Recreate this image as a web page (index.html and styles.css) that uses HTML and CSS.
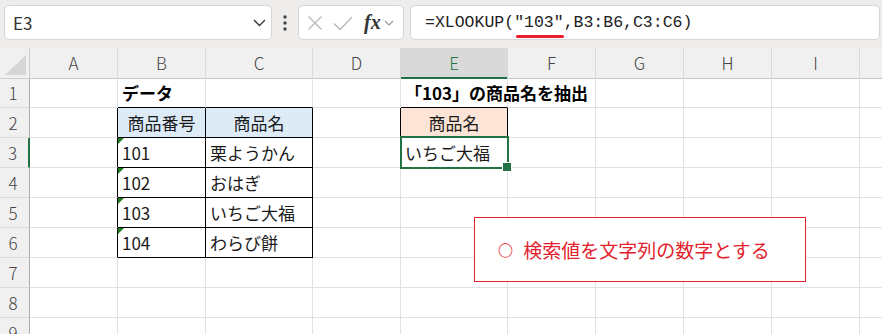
FILE: index.html
```html
<!DOCTYPE html>
<html lang="ja">
  <head>
    <meta charset="UTF-8" />
    <title>XLOOKUP</title>
    <link rel="stylesheet" href="styles.css">
  </head>
  <body>
    <div class="toolbar">
      <div class="namebox">
        <span>E3</span>
        <svg width="13" height="8" viewBox="0 0 13 8"><path d="M1 1l5.5 5.5L12 1" fill="none" stroke="#333" stroke-width="1.3"/></svg>
      </div>
      <div class="dots">
        <svg width="4" height="16" viewBox="0 0 4 16"><circle cx="2" cy="2" r="1.7" fill="#444"/><circle cx="2" cy="8" r="1.7" fill="#444"/><circle cx="2" cy="14" r="1.7" fill="#444"/></svg>
      </div>
      <div class="fxbox">
        <svg width="16" height="16" viewBox="0 0 16 16"><path d="M1.5 1.5l13 13M14.5 1.5l-13 13" stroke="#b8b8b8" stroke-width="1.3"/></svg>
        <svg width="20" height="16" viewBox="0 0 20 16"><path d="M1 8.5l6 6L19 2" fill="none" stroke="#b8b8b8" stroke-width="1.3"/></svg>
        <span class="fx">fx</span>
        <svg width="10" height="6" viewBox="0 0 10 6"><path d="M1 1l4 4 4-4" fill="none" stroke="#999" stroke-width="1.1"/></svg>
      </div>
      <div class="formula">=XLOOKUP(<span class="mark">"103"</span>,B3:B6,C3:C6)</div>
    </div>

    <div class="sheet">
      <div class="row head">
        <div class="corner"><span class="corner-tri"></span></div>
        <div class="ch">A</div><div class="ch">B</div><div class="ch">C</div><div class="ch">D</div>
        <div class="ch on">E</div><div class="ch">F</div><div class="ch">G</div><div class="ch">H</div>
        <div class="ch">I</div><div class="ch"></div>
      </div>
      <div class="row">
        <div class="rh">1</div>
        <div class="c"></div><div class="c kb bold">データ</div><div class="c kb"></div><div class="c"></div>
        <div class="c kb bold">「103」の商品名を抽出</div><div class="c"></div><div class="c"></div><div class="c"></div><div class="c"></div><div class="c"></div>
      </div>
      <div class="row">
        <div class="rh">2</div>
        <div class="c kr"></div><div class="c kr kb blue mid">商品番号</div><div class="c kr kb blue mid">商品名</div><div class="c kr"></div>
        <div class="c kr kb peach mid">商品名</div><div class="c"></div><div class="c"></div><div class="c"></div><div class="c"></div><div class="c"></div>
      </div>
      <div class="row">
        <div class="rh on">3</div>
        <div class="c kr"></div><div class="c kr kb tri">101</div><div class="c kr kb">栗ようかん</div><div class="c"></div>
        <div class="c sel">いちご大福</div><div class="c"></div><div class="c"></div><div class="c"></div><div class="c"></div><div class="c"></div>
      </div>
      <div class="row">
        <div class="rh">4</div>
        <div class="c kr"></div><div class="c kr kb tri">102</div><div class="c kr kb">おはぎ</div><div class="c"></div>
        <div class="c"></div><div class="c"></div><div class="c"></div><div class="c"></div><div class="c"></div><div class="c"></div>
      </div>
      <div class="row">
        <div class="rh">5</div>
        <div class="c kr"></div><div class="c kr kb tri">103</div><div class="c kr kb">いちご大福</div><div class="c"></div>
        <div class="c"></div><div class="c"></div><div class="c"></div><div class="c"></div><div class="c"></div><div class="c"></div>
      </div>
      <div class="row">
        <div class="rh">6</div>
        <div class="c kr"></div><div class="c kr kb tri">104</div><div class="c kr kb">わらび餅</div><div class="c"></div>
        <div class="c"></div><div class="c"></div><div class="c"></div><div class="c"></div><div class="c"></div><div class="c"></div>
      </div>
      <div class="row">
        <div class="rh">7</div>
        <div class="c"></div><div class="c"></div><div class="c"></div><div class="c"></div>
        <div class="c"></div><div class="c"></div><div class="c"></div><div class="c"></div><div class="c"></div><div class="c"></div>
      </div>
      <div class="row">
        <div class="rh">8</div>
        <div class="c"></div><div class="c"></div><div class="c"></div><div class="c"></div>
        <div class="c"></div><div class="c"></div><div class="c"></div><div class="c"></div><div class="c"></div><div class="c"></div>
      </div>
      <div class="row">
        <div class="rh">9</div>
        <div class="c"></div><div class="c"></div><div class="c"></div><div class="c"></div>
        <div class="c"></div><div class="c"></div><div class="c"></div><div class="c"></div><div class="c"></div><div class="c"></div>
      </div>

      <div class="note"><span class="ring">○</span> 検索値を文字列の数字とする</div>
    </div>
  </body>
</html>
```

FILE: styles.css
```css
* {
  box-sizing: border-box;
}
body {
  margin: 0;
  width: 882px;
  height: 334px;
  overflow: hidden;
  background: #fff;
  font-family: "Noto Sans CJK JP", "Noto Sans", sans-serif;
  color: #222;
}

/* formula bar */
.toolbar {
  height: 48px;
  background: #efedec;
  display: flex;
  align-items: flex-start;
  padding: 5px 0 0 4px;
}
.namebox,
.fxbox,
.formula {
  height: 35px;
  background: #fff;
  border: 1px solid #d6d6d6;
  border-radius: 5px;
  display: flex;
  align-items: center;
}
.namebox {
  width: 268px;
  padding: 0 5px 0 8px;
  justify-content: space-between;
  font-size: 17px;
  color: #333;
}
.dots {
  width: 26px;
  height: 35px;
  display: flex;
  align-items: center;
  justify-content: center;
}
.fxbox {
  width: 106px;
  padding: 0 4px 0 8px;
  gap: 10px;
}
.fxbox .fx {
  font-family: "Liberation Serif", serif;
  font-style: italic;
  font-weight: bold;
  font-size: 20px;
  color: #333;
  margin-left: 1px;
  margin-right: -7px;
}
.formula {
  flex: 1;
  margin-left: 6px;
  margin-right: 2px;
  padding-left: 14px;
  font-family: "Liberation Mono", monospace;
  font-size: 16.5px;
  color: #222;
}
.mark {
  position: relative;
}
.mark::after {
  content: "";
  position: absolute;
  left: 2px;
  right: 0;
  bottom: -6px;
  height: 3px;
  border-radius: 2px;
  background: #e8202a;
}

/* grid */
.sheet {
  position: relative;
}
.row {
  display: grid;
  grid-template-columns: 30px 88px 88px 107px 88px 107px 88px 88px 88px 88px 88px;
  height: 30px;
}
.head {
  background: #f0f0f0;
}
.corner {
  border-right: 1px solid #cfcfcf;
  border-bottom: 1px solid #cfcfcf;
  position: relative;
}
.corner-tri {
  position: absolute;
  right: 3px;
  bottom: 3px;
  width: 0;
  height: 0;
  border-left: 21px solid transparent;
  border-bottom: 20px solid #d6d6d6;
}
.ch {
  border-right: 1px solid #d9d9d9;
  border-bottom: 1px solid #c6c6c6;
  text-align: center;
  font-size: 17px;
  line-height: 29px;
  color: #444;
  font-weight: 300;
}
.ch.on {
  background: #d9d9d9;
  color: #217346;
  border-bottom: 2px solid #217346;
}
.rh {
  background: #f0f0f0;
  border-right: 1px solid #ababab;
  border-bottom: 1px solid #d9d9d9;
  text-align: center;
  font-size: 17px;
  line-height: 29px;
  color: #444;
  font-weight: 300;
  padding-right: 3px;
}
.rh.on {
  border-right: 2px solid #217346;
}
.c {
  position: relative;
  border-right: 1px solid #e1e1e1;
  border-bottom: 1px solid #e1e1e1;
  padding: 0 4px;
  font-size: 17px;
  line-height: 29px;
  white-space: nowrap;
  color: #1a1a1a;
}
.c.kr {
  border-right-color: #000;
}
.c.kb {
  border-bottom-color: #000;
}
.bold {
  font-weight: bold;
  color: #000;
}
.mid {
  text-align: center;
}
.blue {
  background: #ddebf7;
}
.peach {
  background: #fce4d6;
}
.tri::before {
  content: "";
  position: absolute;
  left: 0;
  top: 0;
  width: 0;
  height: 0;
  border-top: 6px solid #1e7b1e;
  border-right: 6px solid transparent;
}
.sel {
  z-index: 2;
}
.sel::after {
  content: "";
  position: absolute;
  left: -1px;
  top: -2px;
  right: -2px;
  bottom: -2px;
  border: 2px solid #217346;
}
.sel::before {
  content: "";
  position: absolute;
  right: -5px;
  bottom: -5px;
  width: 8px;
  height: 8px;
  background: #217346;
  border: 1px solid #fff;
  z-index: 3;
}

/* callout shape */
.note {
  position: absolute;
  left: 474px;
  top: 169px;
  width: 332px;
  height: 65px;
  background: #fff;
  border: 1px solid #e3222d;
  color: #e3222d;
  font-size: 19px;
  display: flex;
  align-items: center;
  padding-left: 23px;
  white-space: pre;
}
.note .ring {
  font-size: 15px;
  font-weight: bold;
  margin-right: 6px;
}
```
